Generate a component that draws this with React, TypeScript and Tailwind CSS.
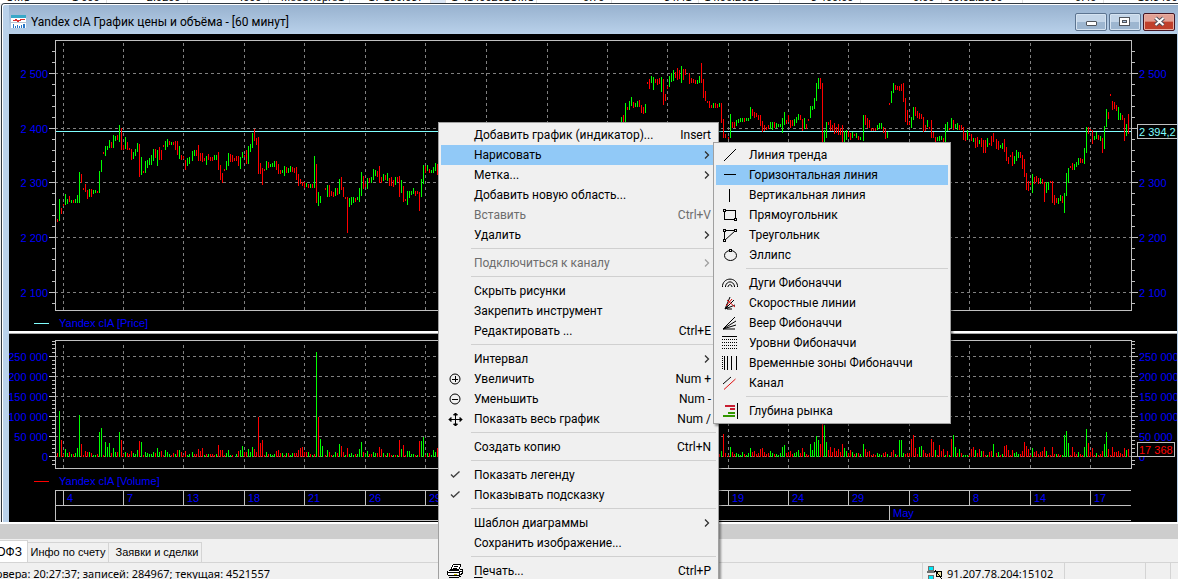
import type { ReactNode } from "react";

type Series = { x: number; bars: string }[];

// Each token is one hourly bar: direction, then high-low in panel pixels. "-" is an empty slot.
const priceSeries: Series = [
  {
    x: 57,
    bars: "r219-221 g199-220 r208-213 r204-205 g194-204 g199-203 r196-201 g200-202 r200-202 g199-202 g195-202 g172-202 r174-182 r188-189 r184-191 r190-198 g189-196 r189-196 g190-193 g190-192 r191-192 g171-192 g160-171 r152-153 g146-155 g146-149 g140-147 r142-147 g135-147 g136-140 r135-139 g125-141 r128-149 r145-149 g137-148 r142-149 r148-149 r149-159 g152-158 g149-155 g143-151 r144-176 g157-174 r171-172 g161-172 g160-167 g158-164 g155-164 g149-160 r149-157 g150-165 r147-159 r150-159 r145-146 g141-149 g139-146 r141-144 g142-144 r142-144 r141-149 r141-154 g146-158 r155-159 r156-158 r160-169 g158-165 g157-163",
  },
  {
    x: 192,
    bars: "g151-160 g150-155 r150-155 r145-160 r153-160 r153-161 r158-160 g156-164 r154-159 r157-160 r157-160 g155-159 g155-159 r152-169 r165-179 r173-182 r169-170 g161-169 g153-165 r154-161 r155-161 r158-160 r156-160 r156-165 g157-168 g152-157 r155-156 r150-163 g146-163 g144-151 g133-147 r129-140 r138-144 r137-173 r163-173 r168-184 r169-170 g161-169 r162-167 g164-166 g163-166 g161-166 r161-169 r164-173 r170-173 g170-172 g166-175 r167-172 g168-172 g166-171 r167-171 r168-172 r167-179 r174-185 r179-183 r182-185 r182-187 g183-186 r184-187 g184-187 r184-187 g156-187 r164-202 g192-205 g196-202",
  },
  {
    x: 325,
    bars: "r188-189 g185-196 r185-196 r191-195 r192-196 g188-195 r188-194 g179-193 r177-189 r187-196 r197-198 r197-232 g198-206 g197-204 g197-202 r198-201 g197-199 g188-201 g172-195 r176-188 r184-186 g178-188 r178-182 g177-182 g169-179 g170-175 r171-176 r166-182 r177-182 g174-180 r175-179 g173-180 r178-185 r177-185 r180-186 g177-184 r177-181 r176-196 g180-192 r186-201 r199-200 g191-204 g191-197 g191-194 g188-193 r191-195 r191-193 r192-210 g179-196 g165-183 r166-172 g165-170 r169-172 g170-172 g167-172 g163-170 r164-174",
  },
  {
    x: 621,
    bars: "g117-122 r115-122 g103-122 r107-109 g101-109 g97-105 r102-107 g103-106 g101-106 r100-106 r105-112 r107-113 g104-112 r82-83 r79-88 g76-82 g77-89 r79-82 r79-84 r78-83 g77-91 r79-104 r94-100 r86-88 g76-86 g73-81 g70-80 r72-77 r68-79 r70-78 g66-82 r69-79 r69-74 - r73-83 r78-82 r79-82 r80-83 g80-83 g76-82 r63-82 r79-97 r91-100 r101-102 r101-107 r105-107 g103-107 r103-107 r104-107 g103-106 r103-122 r119-137 r134-137",
  },
  {
    x: 728,
    bars: "r137-138 g114-137 r122-127 r122-127 g120-125 g119-122 g118-121 g118-121 r118-121 g118-120 g118-120 g107-118 r109-115 r112-117 r113-116 r115-119 r115-125 r121-131 r125-130 r127-129 r125-128 g122-128 g122-129 r122-127 g123-127 g124-126 g124-126 g118-132 g112-124 r120-123 r115-121 r120-127 r120-125 g119-125 g117-122 g114-119 r115-119 r119-130 g118-128 r124-128 r119-120 g106-117 g106-109 g98-108 g83-100 g78-88 r78-88 r83-142 g130-142 g122-137 r122-124 r120-130 r125-130 r123-133 r127-132 r124-134 r128-134 r125-142 g131-142 g130-139 r131-136 r133-139 g132-137 r134-135 g133-137 r136-139 g137-139",
  },
  {
    x: 863,
    bars: "g115-140 r115-124 r118-127 r120-127 r128-130 r128-130 r128-130 g125-129 g123-127 g123-128 r127-132 r129-138 g132-137 r103-104 g91-102 g83-92 r85-89 r86-89 r86-90 r84-90 r83-101 r98-121 r110-124 r122-124 g117-127 g107-119 r107-115 r111-117 r113-118 r114-118 r117-131 r125-130 g120-126 r127-128 r120-137 r132-137 r137-141 g137-140 g136-140 g136-139 r138-142 g124-142 g122-130 r128-129 g118-127 r120-129 g124-127 g123-129 r125-129 r125-129 r127-139 r133-140 g130-139 r133-134 r134-140 g138-141 r138-147 r137-146 g140-143 r138-146 r140-152 r140-152 g138-146 r143-144 r136-145 r133-141",
  },
  {
    x: 996,
    bars: "r139-148 r141-149 g145-147 g143-148 r139-151 r147-160 r157-163 r155-156 r152-165 g156-163 g150-160 g152-157 r152-157 r155-168 r159-176 r173-189 r181-190 r183-184 g174-192 r177-183 r176-181 r178-183 g178-183 r179-183 r182-201 g182-192 g182-189 r181-182 r181-202 r195-204 r198-202 g198-203 g195-200 r196-202 g193-212 g173-195 g168-182 r166-167 r163-169 g164-169 g162-166 g158-164 r158-162 r159-162 g148-163 g127-152 r127-133 r129-130 r130-143 g136-139 g132-138 r135-139 g136-140 r138-152 g126-148 g109-126 r112-118 r94-95 r101-109 r102-108 r105-110 g107-119 g113-119 r115-119 r118-140 g124-135 r114-133",
  },
];

// Volume bars only carry direction and height above the zero line.
const volumeSeries: Series = [
  {
    x: 57,
    bars: "r3 g45 r16 r2 g7 g3 r4 g2 r2 g3 g8 g41 r12 r1 r5 r4 g4 r3 g1 g1 r2 g24 g28 r1 g14 g9 g13 r3 g8 g4 r4 g24 r16 r2 g4 r3 r2 r5 g3 g2 g6 r15 g14 r1 g4 g3 g2 g2 g4 r3 g8 g4 r5 r1 g6 g4 g2 r1 r3 g2 r6 g6 r4 r1 r5 g1 g2",
  },
  {
    x: 192,
    bars: "g4 r2 r2 r7 r5 r8 g1 r2 g2 r2 r2 r1 g2 r11 r6 r6 r1 g3 g6 g1 r1 - g2 r5 g6 g10 r4 r4 g7 g4 g9 r7 r4 r39 r13 r16 r1 g4 r2 g2 g1 g2 r5 r6 r3 g3 r1 g3 r3 g1 g3 r3 r3 r6 r8 r9 r4 r4 g4 r2 g1 r2 g104 r39 g17 g10",
  },
  {
    x: 325,
    bars: "r1 g6 r4 r1 g1 g4 r3 g12 r10 r4 g1 r8 g2 g3 g1 r2 g2 g7 g14 r4 g2 g5 r2 r2 g4 g3 r3 r9 r7 g3 r1 g3 r3 r1 g1 r1 g1 r16 g7 r11 r1 g5 g5 g2 g2 r1 g1 r15 g15 g19 r1 g3 r3 g1 g6 g4 r8",
  },
  {
    x: 719,
    bars: "r2 g5 r22 r3",
  },
  {
    x: 728,
    bars: "r1 g9 r4 r2 g3 g2 g1 g4 r2 g1 g3 g8 r4 r5 r2 r3 r7 r8 r4 r2 r3 g5 g3 r2 g2 g1 g3 g9 g11 r3 r4 r5 r2 g3 g4 g6 r3 r8 g4 r2 r1 g12 g6 g14 g20 g16 r12 r50 g31 g14 r6 r9 r4 r8 r5 r7 r4 r12 g8 g5 r3 r6 g4 r2 g3 r3 g2",
  },
  {
    x: 863,
    bars: "g12 r7 r4 r5 r1 r2 r1 g3 g2 g1 r3 r4 g2 - r4 r6 g2 r1 g16 g16 g3 r2 r3 r3 r17 r21 r8 r2 g9 g10 r6 r3 r2 r3 r17 r14 g6 r1 r11 r5 r7 g1 r5 g1 r17 g21 g9 r3 g7 r3 g1 g1 g1 r1 r7 r9 g6 r3 r7 g5 r5 r1 g1 r4 r5 g12",
  },
  {
    x: 996,
    bars: "r3 g4 r1 g2 r10 r11 r6 r1 r6 g3 g4 g2 r2 r5 r14 r10 r7 r1 g8 r4 r5 r2 r4 r5 r9 g5 r1 r1 r9 r2 g2 r2 r1 g1 g21 g25 g13 r1 r9 r4 r2 g4 r2 r1 g9 g27 r13 r4 r8 r1 g3 r1 r2 r5 g12 g24 r7 r1 r9 r4 r4 r5 r3 r2 r8 g6 r7",
  },
];

const priceLevels = [
  { y: 73, label: "2 500" },
  { y: 128, label: "2 400" },
  { y: 182, label: "2 300" },
  { y: 237, label: "2 200" },
  { y: 292, label: "2 100" },
];

const volumeLevels = [
  { y: 356, label: "250 000" },
  { y: 376, label: "200 000" },
  { y: 396, label: "150 000" },
  { y: 416, label: "100 000" },
  { y: 436, label: "50 000" },
  { y: 456, label: "0" },
];

const days = [
  { x: 63, label: "4" },
  { x: 123, label: "7" },
  { x: 183, label: "13" },
  { x: 244, label: "18" },
  { x: 304, label: "21" },
  { x: 365, label: "26" },
  { x: 425, label: "29" },
  { x: 486, label: "" },
  { x: 547, label: "" },
  { x: 607, label: "" },
  { x: 667, label: "" },
  { x: 728, label: "19" },
  { x: 788, label: "24" },
  { x: 848, label: "29" },
  { x: 909, label: "3" },
  { x: 969, label: "8" },
  { x: 1030, label: "14" },
  { x: 1090, label: "17" },
];

const priceTicks = [51, 62, 84, 95, 106, 117, 139, 150, 161, 171, 193, 204, 215, 226, 248, 259, 270, 281, 303];
const volumeTicks = [341, ...Array.from({ length: 31 }, (_, i) => 344 + i * 4)];

function barPath(series: Series, color: string, base?: number) {
  const parts: string[] = [];
  series.forEach((segment) => {
    segment.bars.split(" ").forEach((token, i) => {
      if (token[0] !== color) return;
      const x = segment.x + i * 2;
      const [a, b] = token.slice(1).split("-").map(Number);
      const top = base ? base - a : a;
      const bottom = base ? base + 1 : b + 1;
      parts.push(`M${x} ${top}h1V${bottom}h-1z`);
    });
  });
  return parts.join("");
}

const HLine = ({ y, fill = "#c0c0c0", h = 1 }: { y: number; fill?: string; h?: number }) => (
  <rect x="0" y={y} width="100%" height={h} fill={fill} />
);

function Splitter() {
  return (
    <>
      <HLine y={297} fill="#ffffff" h={2} />
      <HLine y={299} fill="#a8a8a8" />
    </>
  );
}

function LeftAxis() {
  return (
    <svg className="h-[488px] w-[46px] shrink-0 bg-black" shapeRendering="crispEdges" aria-hidden="true">
      <Splitter />
      <g transform="translate(-9 -34)" fill="#c0c0c0">
        {[...priceTicks, ...volumeTicks].map((y) => (
          <rect key={y} x="52" y={y} width="3" height="1" />
        ))}
        {[...priceLevels, ...volumeLevels].map(({ y, label }) => (
          <g key={y}>
            <rect x="49" y={y} width="6" height="1" />
            <text x="48" y={y + 5} textAnchor="end" fill="#0000ff">{label}</text>
          </g>
        ))}
        <rect x="34" y="323" width="15" height="1" fill="#80ffff" />
        <rect x="34" y="481" width="15" height="1" fill="#ff0000" />
      </g>
    </svg>
  );
}

function Plot() {
  return (
    <svg className="h-[488px] min-w-0 flex-1 bg-black" shapeRendering="crispEdges" role="img" aria-label="Yandex cIA">
      <g stroke="#808080" strokeDasharray="3 3">
        {[...priceLevels, ...volumeLevels].map(({ y }) => (
          <line key={y} x1="0" x2="100%" y1={y - 33.5} y2={y - 33.5} />
        ))}
        {days.map(({ x }) => (
          <path key={x} d={`M${x - 54.5} 9V276M${x - 54.5} 311V434`} />
        ))}
      </g>
      <Splitter />
      <HLine y={97} fill="#80ffff" />
      <g transform="translate(-55 -34)">
        <path d={barPath(priceSeries, "g")} fill="#00ff00" />
        <path d={barPath(priceSeries, "r")} fill="#ff0000" />
        <path d={barPath(volumeSeries, "g", 456)} fill="#00ff00" />
        <path d={barPath(volumeSeries, "r", 456)} fill="#ff0000" />
        <g fill="#c0c0c0">
          <rect x="55" y="40" width="1" height="271" />
          <rect x="55" y="340" width="1" height="129" />
          <rect x="55" y="490" width="1" height="31" />
          <rect x="889" y="505" width="1" height="15" />
          {days.map(({ x }) => (
            <rect key={x} x={x} y="490" width="1" height="15" />
          ))}
        </g>
        <g fill="#0000ff">
          {days.map(({ x, label }) => (label ? <text key={x} x={x + 4} y="502">{label}</text> : null))}
          <text x="893" y="517">May</text>
          <text x="59" y="327">Yandex cIA [Price]</text>
          <text x="59" y="485">Yandex cIA [Volume]</text>
        </g>
      </g>
      {[6, 276, 306, 434, 456, 471, 486].map((y) => (
        <HLine key={y} y={y} />
      ))}
    </svg>
  );
}

function RightAxis() {
  return (
    <svg className="h-[488px] w-[46px] shrink-0 bg-black" shapeRendering="crispEdges" aria-hidden="true">
      <Splitter />
      <g transform="translate(-1131 -34)" fill="#c0c0c0">
        <rect x="1131" y="40" width="1" height="271" />
        <rect x="1131" y="340" width="1" height="129" />
        {[...priceTicks, ...volumeTicks].map((y) => (
          <rect key={y} x="1132" y={y} width="3" height="1" />
        ))}
        {[...priceLevels, ...volumeLevels].map(({ y, label }) => (
          <g key={y}>
            <rect x="1132" y={y} width="6" height="1" />
            {/* the last price box covers this level */}
            {y === 128 ? null : <text x="1139" y={y + 5} fill="#0000ff">{label}</text>}
          </g>
        ))}
        <rect x="1137.5" y="124.5" width="40" height="14" fill="#000000" stroke="#c0c0c0" />
        <text x="1139" y="136" fill="#80ffff">2 394,2</text>
        <rect x="1137.5" y="442.5" width="37" height="14" fill="#000000" stroke="#c0c0c0" />
        <text x="1139" y="454" fill="#ff0000">17 368</text>
      </g>
    </svg>
  );
}

function Icon({ children }: { children: ReactNode }) {
  return (
    <svg width="16" height="16" viewBox="0 0 16 16" fill="none" stroke="#000000" shapeRendering="crispEdges" aria-hidden="true">
      {children}
    </svg>
  );
}

const icons: Record<string, ReactNode> = {
  plus: <Icon><circle cx="8" cy="8" r="5" shapeRendering="auto" /><path d="M5 8.5h6M8.5 5v6" /></Icon>,
  minus: <Icon><circle cx="8" cy="8" r="5" shapeRendering="auto" /><path d="M5 8.5h6" /></Icon>,
  move: <Icon><path d="M2 8.5h13M8.5 2v13" /><path d="M8.5 2l-2 2h4zM8.5 15l-2-2h4zM2 8.5l2-2v4zM15 8.5l-2-2v4z" fill="#000000" shapeRendering="auto" /></Icon>,
  check: <Icon><path d="M4 7.5L6.5 10L12.5 4.5" stroke="#404040" strokeWidth="1.4" shapeRendering="auto" /></Icon>,
  print: (
    <Icon>
      <path d="M5 1h9v3l-2 3H3z" fill="#ffffff" stroke="none" />
      <path d="M1 8h11v5H1zM12 8l3-3v4l-3 4z" fill="#ffffff" stroke="none" />
      <path d="M6 1.500h8M13.500 2v2M5.500 2v2M4.500 4v2M12.500 4v2M7 3.500h4M6 5.500h4M3 6.500h9M2 7.500h10M13 6.500h2M0.500 8v4M15.500 6v4M1 9.500h11M12.500 8v5M13 8.500h2M1 12.500h12M14 10.500h2M13 11.500h2M2 14.500h10M12 13.500h2" />
      <path d="M7 11.500h3" stroke="#c8b800" />
    </Icon>
  ),
  trend: <Icon><path d="M2 14L14 2" shapeRendering="auto" /></Icon>,
  horizontal: <Icon><path d="M2 7.500h12" /></Icon>,
  vertical: <Icon><path d="M7.500 2v13" /></Icon>,
  rectangle: <Icon><path d="M2.500 3.500h11v9h-11z" /><path d="M1.500 2.500h2v2h-2zM12.500 11.500h2v2h-2z" fill="#f0f0f0" /></Icon>,
  triangle: <Icon><path d="M2.500 3.500h11L2.500 13.500z" shapeRendering="auto" /><path d="M1.500 2.500h2v2h-2zM12.500 2.500h2v2h-2zM1.500 12.500h2v2h-2z" fill="#f0f0f0" /></Icon>,
  ellipse: <Icon><ellipse cx="8.500" cy="8.500" rx="6" ry="5" shapeRendering="auto" /><path d="M7.500 2.500h2v2h-2z" fill="#f0f0f0" /></Icon>,
  arcs: (
    <Icon>
      <g shapeRendering="auto">
        <path d="M0.500 12v-1.500C2 2 14 2 15.500 10.500V12M3.500 12v-1C5 5.500 11 5.500 12.500 11v1M6 12c0-3 4-3 4 0" />
      </g>
    </Icon>
  ),
  speed: (
    <Icon>
      <g shapeRendering="auto">
        <path d="M3 14L8 2M3 14L12 5M3 14l10-4M5 9v5h5" />
        <path d="M5 5l8 7M10 4L4 11" stroke="#e01010" />
      </g>
    </Icon>
  ),
  fan: <Icon><path d="M1 14L13 2M1 14l13-8M1 14l13-4M1 14h12" shapeRendering="auto" /></Icon>,
  levels: (
    <Icon>
      <path d="M0 1.500h15" />
      <path d="M0 4.500h15M0 7.500h15M0 10.500h15M0 13.500h15" strokeDasharray="1 1" />
    </Icon>
  ),
  zones: (
    <Icon>
      <path d="M0.500 1v14" strokeDasharray="1 1" />
      <path d="M2.500 1v14M5.500 1v14M9.500 1v14M14.500 1v14" />
    </Icon>
  ),
  channel: <Icon><g shapeRendering="auto"><path d="M1 9l8-7" /><path d="M2 14.500L13.500 4" stroke="#e01010" /></g></Icon>,
  depth: (
    <Icon>
      <g stroke="none">
        <path d="M3 2h10v2H3zM8 5h5v2H8z" fill="#c81e32" />
        <path d="M6 9h7v2H6zM1 12h12v2H1z" fill="#329600" />
        <path d="M15 0h1v16h-1z" fill="#000000" />
      </g>
    </Icon>
  ),
};

type Item = {
  label: ReactNode;
  icon?: string;
  shortcut?: string;
  submenu?: boolean;
  disabled?: boolean;
  active?: boolean;
};

const mainGroups: Item[][] = [
  [
    { label: "Добавить график (индикатор)...", shortcut: "Insert" },
    { label: "Нарисовать", submenu: true, active: true },
    { label: "Метка...", submenu: true },
    { label: "Добавить новую область..." },
    { label: "Вставить", shortcut: "Ctrl+V", disabled: true },
    { label: "Удалить", submenu: true },
  ],
  [{ label: "Подключиться к каналу", submenu: true, disabled: true }],
  [
    { label: "Скрыть рисунки" },
    { label: "Закрепить инструмент" },
    { label: "Редактировать ...", shortcut: "Ctrl+E" },
  ],
  [
    { label: "Интервал", submenu: true },
    { label: "Увеличить", icon: "plus", shortcut: "Num +" },
    { label: "Уменьшить", icon: "minus", shortcut: "Num -" },
    { label: "Показать весь график", icon: "move", shortcut: "Num /" },
  ],
  [{ label: "Создать копию", shortcut: "Ctrl+N" }],
  [
    { label: "Показать легенду", icon: "check" },
    { label: "Показывать подсказку", icon: "check" },
  ],
  [
    { label: "Шаблон диаграммы", submenu: true },
    { label: "Сохранить изображение..." },
  ],
  [{ label: <><u className="underline-offset-2">П</u>ечать...</>, icon: "print", shortcut: "Ctrl+P" }],
];

const drawGroups: Item[][] = [
  [
    { label: "Линия тренда", icon: "trend" },
    { label: "Горизонтальная линия", icon: "horizontal", active: true },
    { label: "Вертикальная линия", icon: "vertical" },
    { label: "Прямоугольник", icon: "rectangle" },
    { label: "Треугольник", icon: "triangle" },
    { label: "Эллипс", icon: "ellipse" },
  ],
  [
    { label: "Дуги Фибоначчи", icon: "arcs" },
    { label: "Скоростные линии", icon: "speed" },
    { label: "Веер Фибоначчи", icon: "fan" },
    { label: "Уровни Фибоначчи", icon: "levels" },
    { label: "Временные зоны Фибоначчи", icon: "zones" },
    { label: "Канал", icon: "channel" },
  ],
  [{ label: "Глубина рынка", icon: "depth" }],
];

function MenuItem({ item }: { item: Item }) {
  return (
    <button
      type="button"
      role="menuitem"
      disabled={item.disabled}
      className={`flex h-5 w-full items-center pr-[5px] text-left text-[12px] leading-5 ${item.active ? "bg-[#91c9f7]" : ""} ${item.disabled ? "text-[#6d6d6d]" : "text-black"}`}
    >
      <span className="flex w-[33px] shrink-0 items-center pl-[6px]">{item.icon ? icons[item.icon] : null}</span>
      <span className="flex-1 whitespace-nowrap">{item.label}</span>
      {item.shortcut ? <span className="whitespace-nowrap">{item.shortcut}</span> : null}
      {item.submenu ? (
        <svg width="8" height="10" viewBox="0 0 8 10" fill="none" stroke={item.disabled ? "#a0a0a0" : "#303030"} strokeWidth="1.3" aria-hidden="true">
          <path d="M2 1.500L5.500 5L2 8.500" />
        </svg>
      ) : null}
    </button>
  );
}

function Menu({ label, groups, className }: { label: string; groups: Item[][]; className: string }) {
  return (
    <div role="menu" aria-label={label} className={`absolute border border-[#a0a0a0] bg-[#f0f0f0] p-[2px] shadow-[2px_2px_2px_rgba(0,0,0,0.4)] ${className}`}>
      {groups.map((group, i) => (
        <div key={i}>
          {i > 0 ? <div role="separator" className="mt-[3px] mb-1 ml-[30px] h-px bg-[#d0d0d0]" /> : null}
          {group.map((item, j) => (
            <MenuItem key={j} item={item} />
          ))}
        </div>
      ))}
    </div>
  );
}

function TitleBar() {
  const button = "flex h-[18px] w-8 items-center justify-center rounded-[2px] border";
  const plain = "border-[#5c7490] bg-linear-to-b from-[#c3d5e8] from-50% to-[#9db6d0] to-50% shadow-[inset_0_0_0_1px_#d5e3f1]";
  return (
    <header className="flex h-[29px] items-center gap-1 bg-linear-to-b from-[#98b2cf] to-[#b9d1ea] pt-1 pr-[3px] pl-[2px]">
      <svg width="16" height="14" viewBox="0 0 16 14" shapeRendering="crispEdges" aria-hidden="true">
        <path d="M0 0h15v13H0z" fill="#ffffff" />
        <path d="M0 0h15v3H0z" fill="#38a8c8" />
        <path d="M2 5.500h2l1-1l2 2l1-1h1l1-1h4M0 7.500h15" fill="none" stroke="#d83030" />
        <path d="M0 7h15v1H0z" fill="#b8c4d0" />
        <path d="M2 9h1v4H2zM4 11h1v2H4zM6 10h1v3H6zM8 11h1v2H8zM10 10h1v3h-1zM12 9h2v4h-2z" fill="#2878c8" />
      </svg>
      <h1 className="flex-1 truncate text-[12px] leading-5 text-black">Yandex cIA График цены и объёма - [60 минут]</h1>
      <div className="flex gap-[2px]">
        <button type="button" aria-label="Свернуть" className={`${button} ${plain}`}>
          <span className="mt-1 h-[5px] w-[11px] rounded-[1px] border border-[#50555c] bg-white" />
        </button>
        <button type="button" aria-label="Развернуть" className={`${button} ${plain}`}>
          <svg width="12" height="10" viewBox="0 0 12 10" shapeRendering="crispEdges" aria-hidden="true">
            <path d="M0.500 0.500h10v8h-10z" fill="#ffffff" stroke="#50555c" />
            <path d="M3.500 3.500h4v2h-4z" fill="#a8c0dc" stroke="#50555c" />
          </svg>
        </button>
        <button type="button" aria-label="Закрыть" className={`${button} border-[#431422] bg-linear-to-b from-[#e2a094] from-45% to-[#c0402c] to-50% shadow-[inset_0_0_0_1px_#e8b0a4]`}>
          <svg width="13" height="11" viewBox="0 0 13 11" fill="none" aria-hidden="true">
            <path d="M2.500 2l8 7M10.500 2l-8 7" stroke="#50505c" strokeWidth="4" />
            <path d="M2.500 2l8 7M10.500 2l-8 7" stroke="#ffffff" strokeWidth="2" />
          </svg>
        </button>
      </div>
    </header>
  );
}

const quotes = [
  { text: "UMU", className: "w-[25px] text-left" },
  { text: "1 000", className: "w-[81px] text-right" },
  { text: "2.9200", className: "w-[81px] text-right" },
  { text: ".000", className: "w-[81px] text-right" },
  { text: "+МосЭнерго1", className: "w-[81px] text-left" },
  { text: "17 130.037", className: "w-[81px] text-right" },
  { text: "", className: "w-[15px] bg-[#dbe6f4]" },
  { text: "1+.1400201UMU", className: "w-[91px] text-left" },
  { text: "0.70", className: "w-[75px] text-right" },
  { text: "34.41", className: "w-[87px] text-right" },
  { text: "14.06.2013", className: "w-[81px] text-left" },
  { text: "3 400.00", className: "w-[81px] text-right" },
  { text: "0.00", className: "w-[81px] text-right" },
  { text: "00.02.2030", className: "w-[81px] text-left" },
  { text: "0.40", className: "w-[81px] text-right" },
  { text: "10.3400", className: "w-[81px] text-right" },
];

function QuoteRow() {
  return (
    <div className="flex h-[3px] items-end overflow-hidden bg-white">
      <table className="w-[1184px] shrink-0 table-fixed text-[11px] leading-3 whitespace-nowrap text-black font-['Liberation_Sans',sans-serif]">
        <tbody>
          <tr>
            {quotes.map(({ text, className }, i) => (
              <td key={i} className={`border-r border-[#e0e0e0] px-[6px] py-0 ${className}`}>{text}</td>
            ))}
          </tr>
        </tbody>
      </table>
    </div>
  );
}

function StatusBar() {
  return (
    <footer className="flex h-[17px] border-t border-[#d4d4d4] bg-[#f0f0f0] text-[11px] leading-[22px] text-black font-['Noto_Sans',sans-serif]">
      <div className="flex w-[270px] justify-end overflow-hidden whitespace-nowrap">
        <span>Время сервера: 20:27:37; записей: 284967; текущая: 4521557</span>
      </div>
      <div className="flex-1" />
      <div className="flex w-[142px] gap-1 border-l border-[#d4d4d4] pl-1 whitespace-nowrap">
        <svg width="16" height="16" viewBox="0 0 16 16" className="mt-[3px] shrink-0" shapeRendering="crispEdges" aria-hidden="true">
          <path d="M1 0h6v5H1zM0 5h8v2H0zM1 9h6v5H1z" fill="#707070" />
          <path d="M2 1h4v3H2zM2 10h4v3H2z" fill="#00e8f8" />
          <path d="M7 5h3v1H7z" fill="#000000" />
          <circle cx="12" cy="8" r="3" fill="#e8e0a0" stroke="#000000" />
          <path d="M8 4l7 9" stroke="#000000" />
        </svg>
        91.207.78.204:15102
      </div>
      <div className="w-[81px] border-l border-[#d4d4d4]" />
      <div className="w-[25px] border-l border-[#d4d4d4]" />
      <div className="w-2 border-l border-[#d4d4d4]" />
    </footer>
  );
}

export default function App() {
  return (
    <div className="relative flex h-screen flex-col overflow-hidden bg-[#f0f0f0] font-[Roboto,'Open_Sans',sans-serif]">
      <QuoteRow />
      <main className="ml-px shrink-0 rounded-tl-[4px] border-t border-l border-[#303840] bg-[#b9d1ea]">
        <div className="rounded-tl-[3px] border-t border-l border-white">
          <div className="pl-[6px]">
            <TitleBar />
            <div className="flex pr-px font-['Liberation_Sans',sans-serif] text-[11px]">
              <LeftAxis />
              <Plot />
              <RightAxis />
            </div>
          </div>
        </div>
      </main>
      <div className="h-[17px] shrink-0 border-t-2 border-white bg-[#cdcdcd]" />
      <nav className="flex h-[23px] shrink-0 items-end text-[11px] font-['Liberation_Sans',sans-serif]">
        <button type="button" className="flex h-[22px] w-7 items-center justify-end overflow-hidden border-t border-r border-[#d4d4d4] bg-white pr-[5px] text-[12px]">ОФЗ</button>
        <button type="button" className="h-5 w-[81px] border-t border-r border-[#d4d4d4] whitespace-nowrap">Инфо по счету</button>
        <button type="button" className="h-5 w-[93px] border-t border-r border-[#d4d4d4] pl-1 whitespace-nowrap">Заявки и сделки</button>
      </nav>
      <StatusBar />
      <Menu label="График" groups={mainGroups} className="top-[122px] left-[438px] w-[281px]" />
      <Menu label="Нарисовать" groups={drawGroups} className="top-[142px] left-[713px] w-[238px]" />
    </div>
  );
}
